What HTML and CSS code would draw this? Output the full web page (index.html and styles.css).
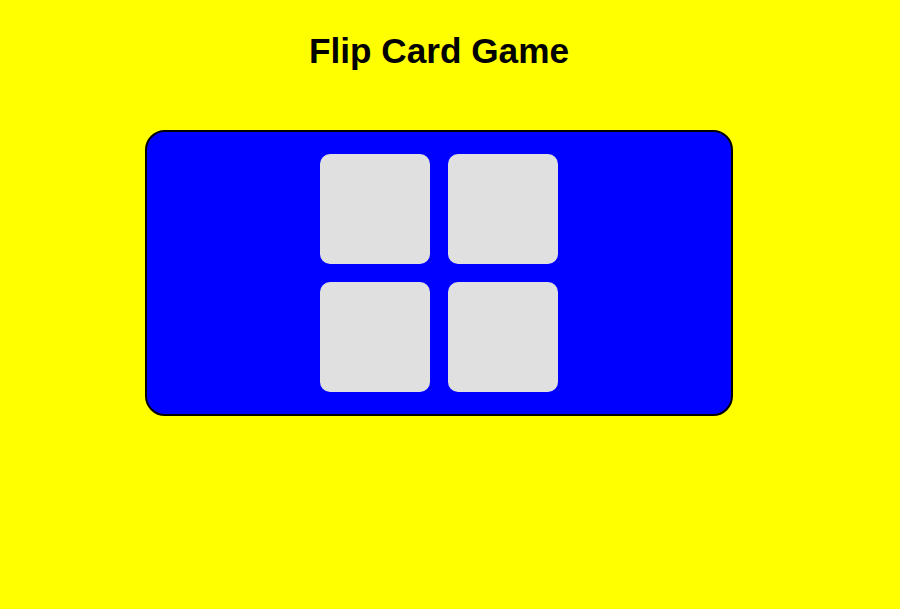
FILE: index.html
```html
<!DOCTYPE html>
<html lang="en">
<head>
<meta charset="utf-8">
<title>Flip Card Game</title>
<link rel="stylesheet" href="styles.css">
</head>
<body>
<div class="page">
  <h1 class="title">Flip Card Game</h1>
  <div class="board">
    <div class="card"></div>
    <div class="card"></div>
    <div class="card"></div>
    <div class="card"></div>
  </div>
</div>
</body>
</html>
```
FILE: styles.css
```css
html, body {
  margin: 0;
  padding: 0;
  background: #ffff00;
  font-family: "Liberation Sans", Arial, sans-serif;
}
.page {
  width: 878px;
  display: flex;
  flex-direction: column;
  align-items: center;
  padding-top: 31px;
}
.title {
  margin: 0 0 59px;
  font-size: 35.2px;
  line-height: 40px;
  font-weight: bold;
  color: #000;
}
.board {
  box-sizing: border-box;
  width: 588px;
  height: 286px;
  border: 2px solid #000;
  border-radius: 20px;
  background: #0000ff;
  display: grid;
  grid-template-columns: repeat(2, 110px);
  grid-auto-rows: 110px;
  gap: 18px;
  justify-content: center;
  align-content: center;
}
.card {
  background: #e0e0e0;
  border-radius: 10px;
}
```
